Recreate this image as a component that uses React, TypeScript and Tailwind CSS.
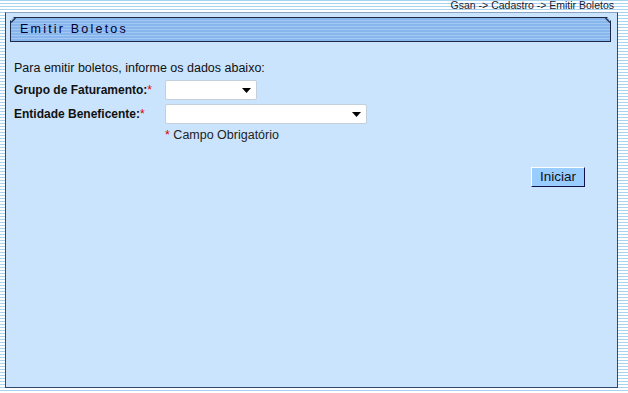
import React from "react";

const Arrow: React.FC = () => (
  <svg width="9" height="5" viewBox="0 0 9 5" className="shrink-0">
    <path d="M0 0h9L4.5 5z" fill="#000" />
  </svg>
);

const Select: React.FC<{ width: string }> = ({ width }) => (
  <div
    className={`${width} h-[20px] bg-white border border-[#c4cfdc] rounded-[2px] flex items-center justify-end pr-[5px]`}
  >
    <Arrow />
  </div>
);

const App: React.FC = () => {
  return (
    <div
      className="w-[628px] h-[393px] overflow-hidden bg-[image:repeating-linear-gradient(to_bottom,#a8d4f0_0px,#a8d4f0_1px,#ffffff_1px,#ffffff_3px)] font-['Liberation_Sans',Arial,sans-serif] text-[#000022]"
    >
      <div className="h-[12px] flex justify-end pr-[14px] text-[10.5px] leading-[11px] text-[#1a1a33]">
        Gsan -&gt; Cadastro -&gt; Emitir Boletos
      </div>

      <div className="ml-[5px] w-[613px] h-[376px] bg-[#cae4fd] border border-[#34466a] border-t-[#8aa6c4] pl-[4px] pr-[6px] pt-[4px] flex flex-col">
        {/* title bar */}
        <div className="relative h-[25px] border border-[#1c2a48] bg-[image:repeating-linear-gradient(to_bottom,#88b6ec_0px,#88b6ec_2px,#a2c8f4_2px,#a2c8f4_3px)] flex items-center pl-[9px] [clip-path:polygon(4px_0,calc(100%-4px)_0,100%_4px,100%_100%,0_100%,0_4px)]">
          <svg className="absolute left-0 top-0" width="5" height="5" viewBox="0 0 5 5">
            <path d="M0 4.5L4.5 0" stroke="#1c2a48" strokeWidth="1.2" />
          </svg>
          <svg className="absolute right-0 top-0" width="5" height="5" viewBox="0 0 5 5">
            <path d="M0.5 0L5 4.5" stroke="#1c2a48" strokeWidth="1.2" />
          </svg>
          <span className="text-[12.5px] tracking-[2.2px] text-[#000033]">Emitir Boletos</span>
        </div>

        <div className="pl-[4px] pt-[19px] text-[12.5px] leading-[14px]">
          <p className="text-[#111]">Para emitir boletos, informe os dados abaixo:</p>

          <div className="flex items-center mt-[5px]">
            <span className="w-[151px] font-bold text-[12px] text-[#111]">
              Grupo de Faturamento:<span className="text-[#e00000] font-normal">*</span>
            </span>
            <Select width="w-[92px]" />
          </div>

          <div className="flex items-center mt-[4px]">
            <span className="w-[151px] font-bold text-[12px] text-[#111]">
              Entidade Beneficente:<span className="text-[#e00000] font-normal">*</span>
            </span>
            <Select width="w-[202px]" />
          </div>

          <p className="ml-[151px] mt-[4px] text-[#222]">
            <span className="text-[#e00000]">*</span> Campo Obrigatório
          </p>

          <div className="flex justify-end pr-[26px] mt-[25px]">
            <button className="w-[54px] h-[20px] bg-[#99ccff] border border-t-white border-l-white border-r-[#10104a] border-b-[#10104a] text-[13.5px] leading-[14px] text-[#111]">
              Iniciar
            </button>
          </div>
        </div>
      </div>
    </div>
  );
};

export default App;
